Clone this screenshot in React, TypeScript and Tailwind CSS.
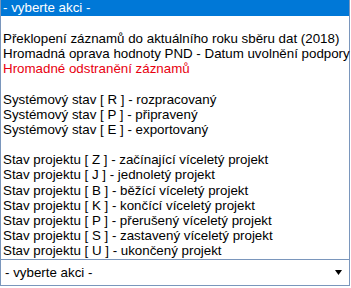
const rows: { text: string; red?: boolean }[] = [
  { text: "" },
  { text: "Překlopení záznamů do aktuálního roku sběru dat (2018)" },
  { text: "Hromadná oprava hodnoty PND - Datum uvolnění podpory" },
  { text: "Hromadné odstranění záznamů", red: true },
  { text: "" },
  { text: "Systémový stav [ R ] - rozpracovaný" },
  { text: "Systémový stav [ P ] - připravený" },
  { text: "Systémový stav [ E ] - exportovaný" },
  { text: "" },
  { text: "Stav projektu [ Z ] - začínající víceletý projekt" },
  { text: "Stav projektu [ J ] - jednoletý projekt" },
  { text: "Stav projektu [ B ] - běžící víceletý projekt" },
  { text: "Stav projektu [ K ] - končící víceletý projekt" },
  { text: "Stav projektu [ P ] - přerušený víceletý projekt" },
  { text: "Stav projektu [ S ] - zastavený víceletý projekt" },
  { text: "Stav projektu [ U ] - ukončený projekt" },
];

export default function App() {
  return (
    <div className="h-[288px] w-[351px] overflow-hidden bg-white font-['Liberation_Sans',Arial,sans-serif] text-[13.33px] text-black">
      <div className="w-[350px] border-x border-b border-[#7a96bc] bg-white">
        <div className="flex h-[16px] items-center bg-[#0078d7] pl-[2px] text-white">- vyberte akci -</div>
        {rows.map((row, i) => (
          <div
            key={i}
            className={`flex h-[15.2px] items-center whitespace-nowrap pl-[2px] ${row.red ? "text-[#e8000f]" : ""}`}
          >
            {row.text}
          </div>
        ))}
      </div>
      <div className="flex h-[26px] w-[350px] items-center justify-between border-x border-b border-[#7a96bc] bg-white pl-[4px] pr-[7px]">
        <span>- vyberte akci -</span>
        <svg width="7" height="5" viewBox="0 0 7 5">
          <path d="M0 0h7L3.5 5z" fill="#000" />
        </svg>
      </div>
    </div>
  );
}
